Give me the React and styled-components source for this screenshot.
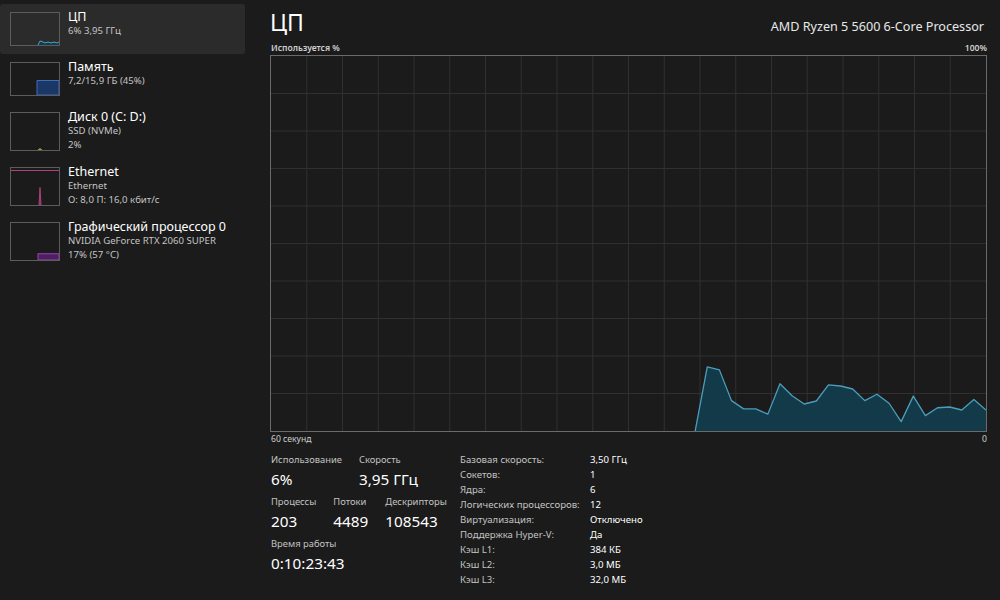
import React from "react";
import styled, { createGlobalStyle } from "styled-components";

const Global = createGlobalStyle`
  html, body { margin: 0; padding: 0; background: #1b1b1b; }
  body { font-family: "Noto Sans", "Open Sans", sans-serif; color: #fff; }
`;

const Page = styled.div`
  display: flex;
  width: 1000px;
  height: 600px;
  background: #1b1b1b;
  overflow: hidden;
`;

const Sidebar = styled.nav`
  width: 245px;
  padding-top: 4px;
  display: flex;
  flex-direction: column;
`;

const Row = styled.div`
  display: flex;
  align-items: stretch;
  gap: 8px;
  padding: 0 0 0 10px;
  min-height: ${(p) => (p.$lines === 3 ? 55 : 50)}px;
  background: ${(p) => (p.$active ? "#2b2b2b" : "transparent")};
  border-radius: 3px;
  box-sizing: border-box;
`;

const Thumb = styled.div`
  width: 50px;
  margin: 8px 0;
  border: 1px solid #5c5c5c;
  box-sizing: border-box;
  overflow: hidden;
  svg { display: block; width: 100%; height: 100%; }
`;

const RowText = styled.div`
  display: flex;
  flex-direction: column;
  padding-top: 6px;
`;

const RowTitle = styled.div`
  font-size: 12.5px;
  line-height: 14px;
  color: #fff;
  white-space: nowrap;
`;

const RowSub = styled.div`
  font-size: 9.6px;
  line-height: 14px;
  color: #c4c4c4;
  white-space: nowrap;
`;

const Main = styled.main`
  flex: 1;
  padding: 0 13px 0 25px;
  display: flex;
  flex-direction: column;
  min-width: 0;
`;

const Header = styled.header`
  display: flex;
  justify-content: space-between;
  align-items: baseline;
  height: 41px;
  padding-top: 8px;
  box-sizing: border-box;
`;

const Title = styled.h1`
  margin: 0;
  font-size: 23px;
  font-weight: 400;
  line-height: 28px;
  color: #fff;
`;

const Model = styled.div`
  font-size: 12.6px;
  color: #e8e8e8;
  margin-right: 3px;
`;

const AxisRow = styled.div`
  display: flex;
  justify-content: space-between;
  font-size: 8.6px;
  line-height: 14px;
  color: #cfcfcf;
  padding: 0 0 0 1px;
  font-weight: ${(p) => (p.$bold ? 600 : 400)};
`;

const GraphBox = styled.div`
  height: 377px;
  border: 1px solid #6a6a6a;
  box-sizing: border-box;
  svg { display: block; width: 100%; height: 100%; }
`;

const Stats = styled.section`
  display: flex;
  padding-top: 6px;
`;

const StatsLeft = styled.div`
  width: 189px;
  padding-left: 1px;
  display: flex;
  flex-direction: column;
  gap: 3px;
`;

const StatLine = styled.div`
  display: flex;
  gap: 17px;
`;

const Stat = styled.div`
  display: flex;
  flex-direction: column;
`;

const StatLabel = styled.div`
  font-size: 9.4px;
  line-height: 15px;
  color: #c2c2c2;
  white-space: nowrap;
`;

const StatValue = styled.div`
  font-size: 15.3px;
  line-height: 24px;
  color: #fff;
  white-space: nowrap;
`;

const InfoTable = styled.dl`
  margin: 0;
  display: grid;
  grid-template-columns: 130px auto;
  grid-auto-rows: 15px;
  align-items: center;
  align-content: start;
  font-size: 9.6px;
`;

const InfoKey = styled.dt`
  color: #c2c2c2;
  white-space: nowrap;
`;

const InfoVal = styled.dd`
  margin: 0;
  color: #fff;
  white-space: nowrap;
`;

const W = 715;
const H = 375;
const cpu = [0, 17.1, 16.3, 8.1, 5.9, 5.9, 4.5, 12.6, 9.4, 7.2, 8.0, 12.3, 12.0, 11.2, 8.1, 9.8, 7.4, 2.5, 9.3, 4.1, 6.2, 6.4, 5.6, 8.4, 5.6];

function CpuGraph() {
  const step = W / 59;
  const pts = cpu.map((v, i) => [(35 + i) * step, H - (v / 100) * H]);
  const line = pts.map((p) => p.join(",")).join(" ");
  const area = `${pts[0][0]},${H} ${line} ${W},${H}`;
  const vx = Array.from({ length: 19 }, (_, i) => ((i + 1) * W) / 20);
  const hy = Array.from({ length: 9 }, (_, i) => ((i + 1) * H) / 10);
  return (
    <svg viewBox={`0 0 ${W} ${H}`} preserveAspectRatio="none">
      {vx.map((x) => (
        <line key={"v" + x} x1={x} x2={x} y1={0} y2={H} stroke="#303030" strokeWidth="1" />
      ))}
      {hy.map((y) => (
        <line key={"h" + y} x1={0} x2={W} y1={y} y2={y} stroke="#303030" strokeWidth="1" />
      ))}
      <polygon points={area} fill="#133a49" />
      <polyline points={line} fill="none" stroke="#4c9dbd" strokeWidth="1.3" strokeLinejoin="round" />
    </svg>
  );
}

const thumbs = {
  cpu: (
    <svg viewBox="0 0 48 32" preserveAspectRatio="none">
      <polygon points="27,32 29,28 32,29 34,30 37,29 40,30 43,29 46,30 48,29 48,32" fill="#133a49" />
      <polyline points="27,32 29,28 32,29 34,30 37,29 40,30 43,29 46,30 48,29" fill="none" stroke="#4aa3c4" strokeWidth="1" />
    </svg>
  ),
  mem: (
    <svg viewBox="0 0 48 32" preserveAspectRatio="none">
      <path d="M26,32 V17.5 H48 V32 Z" fill="#1b3766" stroke="#3d6bc0" strokeWidth="1" />
    </svg>
  ),
  disk: (
    <svg viewBox="0 0 48 36" preserveAspectRatio="none">
      <path d="M27,36 L29,34.5 L31,36 Z" fill="#6a8a2a" stroke="#8fb03a" strokeWidth="0.8" />
    </svg>
  ),
  eth: (
    <svg viewBox="0 0 48 36" preserveAspectRatio="none">
      <line x1="0" x2="48" y1="2.5" y2="2.5" stroke="#b04080" strokeWidth="1" />
      <path d="M28,36 L29,19 L30,36 Z" fill="#7a2a58" stroke="#c04a8c" strokeWidth="0.8" />
    </svg>
  ),
  gpu: (
    <svg viewBox="0 0 48 36" preserveAspectRatio="none">
      <path d="M27,36 V30 H48 V36 Z" fill="#4c1f5e" stroke="#a040b8" strokeWidth="1" />
    </svg>
  ),
};

const items = [
  { key: "cpu", title: "ЦП", subs: ["6% 3,95 ГГц"], active: true },
  { key: "mem", title: "Память", subs: ["7,2/15,9 ГБ (45%)"] },
  { key: "disk", title: "Диск 0 (C: D:)", subs: ["SSD (NVMe)", "2%"] },
  { key: "eth", title: "Ethernet", subs: ["Ethernet", "О: 8,0 П: 16,0 кбит/с"] },
  { key: "gpu", title: "Графический процессор 0", subs: ["NVIDIA GeForce RTX 2060 SUPER", "17%  (57 °C)"] },
];

const info = [
  ["Базовая скорость:", "3,50 ГГц"],
  ["Сокетов:", "1"],
  ["Ядра:", "6"],
  ["Логических процессоров:", "12"],
  ["Виртуализация:", "Отключено"],
  ["Поддержка Hyper-V:", "Да"],
  ["Кэш L1:", "384 КБ"],
  ["Кэш L2:", "3,0 МБ"],
  ["Кэш L3:", "32,0 МБ"],
];

export default function App() {
  return (
    <Page>
      <Global />
      <Sidebar>
        {items.map((it) => (
          <Row key={it.key} $active={it.active} $lines={1 + it.subs.length}>
            <Thumb>{thumbs[it.key]}</Thumb>
            <RowText>
              <RowTitle>{it.title}</RowTitle>
              {it.subs.map((s) => (
                <RowSub key={s}>{s}</RowSub>
              ))}
            </RowText>
          </Row>
        ))}
      </Sidebar>
      <Main>
        <Header>
          <Title>ЦП</Title>
          <Model>AMD Ryzen 5 5600 6-Core Processor</Model>
        </Header>
        <AxisRow $bold>
          <span>Используется %</span>
          <span>100%</span>
        </AxisRow>
        <GraphBox>
          <CpuGraph />
        </GraphBox>
        <AxisRow>
          <span>60 секунд</span>
          <span>0</span>
        </AxisRow>
        <Stats>
          <StatsLeft>
            <StatLine>
              <Stat>
                <StatLabel>Использование</StatLabel>
                <StatValue>6%</StatValue>
              </Stat>
              <Stat>
                <StatLabel>Скорость</StatLabel>
                <StatValue>3,95 ГГц</StatValue>
              </Stat>
            </StatLine>
            <StatLine>
              <Stat>
                <StatLabel>Процессы</StatLabel>
                <StatValue>203</StatValue>
              </Stat>
              <Stat>
                <StatLabel>Потоки</StatLabel>
                <StatValue>4489</StatValue>
              </Stat>
              <Stat>
                <StatLabel>Дескрипторы</StatLabel>
                <StatValue>108543</StatValue>
              </Stat>
            </StatLine>
            <StatLine>
              <Stat>
                <StatLabel>Время работы</StatLabel>
                <StatValue>0:10:23:43</StatValue>
              </Stat>
            </StatLine>
          </StatsLeft>
          <InfoTable>
            {info.map(([k, v]) => (
              <React.Fragment key={k}>
                <InfoKey>{k}</InfoKey>
                <InfoVal>{v}</InfoVal>
              </React.Fragment>
            ))}
          </InfoTable>
        </Stats>
      </Main>
    </Page>
  );
}
